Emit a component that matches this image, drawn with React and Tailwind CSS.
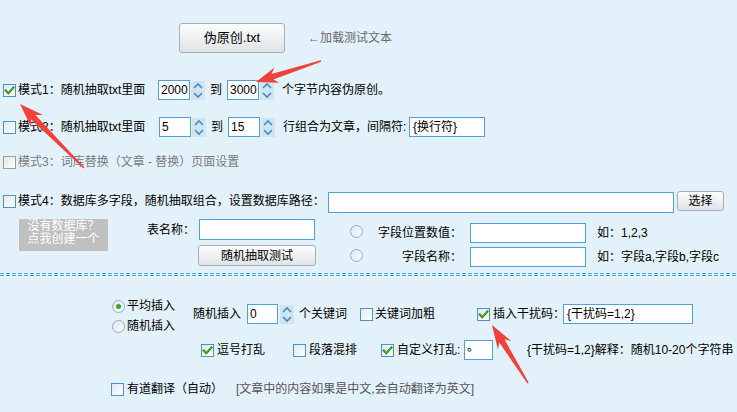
import React from "react";

const Check = ({ checked, gray }) => (
  <span
    className={
      gray
        ? "inline-flex w-[13px] h-[13px] shrink-0 items-center justify-center border border-[#9c9c9c] bg-linear-to-br from-[#e6e6e6] to-white"
        : "inline-flex w-[13px] h-[13px] shrink-0 items-center justify-center border border-[#4d92cc] bg-linear-to-br from-[#dfe9f2] to-white"
    }
  >
    {checked && (
      <svg width="11" height="11" viewBox="0 0 11 11">
        <path d="M1.8 5.6 L4.3 8.2 L9.4 2.6" stroke="#2f8f12" strokeWidth="2.2" fill="none" strokeLinecap="square" />
        <path d="M2.4 5.6 L4.3 7.5 L9 2.8" stroke="#66c22e" strokeWidth="0.9" fill="none" />
      </svg>
    )}
  </span>
);

const Spin = () => (
  <span className="flex w-[14px] h-[19px] shrink-0 items-center justify-center bg-[#d2e4f0]">
    <svg width="12" height="17" viewBox="0 0 12 17">
      <path d="M2 6 L6 2 L10 6" stroke="#3a8fd2" strokeWidth="1.6" fill="none" />
      <path d="M2 11 L6 15 L10 11" stroke="#3a8fd2" strokeWidth="1.6" fill="none" />
    </svg>
  </span>
);

const Radio = ({ on, className = "" }) => (
  <span
    className={
      "flex w-[13px] h-[13px] shrink-0 items-center justify-center rounded-full border border-[#8eaed0] bg-linear-to-br from-[#dde6ef] to-white " +
      className
    }
  >
    {on && <span className="w-[5px] h-[5px] rounded-full bg-[#36a81c]" />}
  </span>
);

const Btn = ({ className = "", children }) => (
  <div
    className={
      "flex shrink-0 items-center justify-center rounded-[3px] border border-[#a9aeb3] bg-linear-to-b from-[#fdfdfd] to-[#e0e4e8] " +
      className
    }
  >
    {children}
  </div>
);

const Box = ({ className = "", children }) => (
  <div className={"flex shrink-0 items-center overflow-hidden whitespace-nowrap border border-[#4ea2da] bg-white pl-[2px] " + className}>
    {children}
  </div>
);

function arrowPts(tx, ty, px, py, headLen, headW, neckW, tailW) {
  const dx = px - tx;
  const dy = py - ty;
  const L = Math.hypot(dx, dy);
  const ux = dx / L;
  const uy = dy / L;
  const nx = -uy;
  const ny = ux;
  const nkx = px - ux * headLen * 0.78;
  const nky = py - uy * headLen * 0.78;
  const bx = px - ux * headLen;
  const by = py - uy * headLen;
  const p = [
    [tx + (nx * tailW) / 2, ty + (ny * tailW) / 2],
    [nkx + (nx * neckW) / 2, nky + (ny * neckW) / 2],
    [bx + (nx * headW) / 2, by + (ny * headW) / 2],
    [px, py],
    [bx - (nx * headW) / 2, by - (ny * headW) / 2],
    [nkx - (nx * neckW) / 2, nky - (ny * neckW) / 2],
    [tx - (nx * tailW) / 2, ty - (ny * tailW) / 2],
  ];
  return p.map((q) => q[0].toFixed(1) + "," + q[1].toFixed(1)).join(" ");
}

export default function App() {
  return (
    <div className="relative w-[737px] h-[412px] overflow-hidden bg-[#e3f1fa] text-[12px] leading-[14px] text-black font-[family-name:'Liberation_Sans','Noto_Sans_CJK_SC',sans-serif]">
      <div className="flex flex-col">
        {/* top button */}
        <div className="mt-[23px] flex h-[30px] items-center pl-[179px]">
          <Btn className="w-[106px] h-[30px] text-[13px]">伪原创.txt</Btn>
          <span className="ml-[23px] text-[#6a6a6a]">←加载测试文本</span>
        </div>

        {/* mode 1 */}
        <div className="mt-[27px] flex h-[20px] items-center pl-[3px] whitespace-nowrap">
          <Check checked />
          <span className="ml-[2px] w-[140px]">模式1：随机抽取txt里面</span>
          <Box className="w-[32px] h-[20px]">2000</Box>
          <span className="ml-[1px]"><Spin /></span>
          <span className="w-[22px] text-center">到</span>
          <Box className="w-[32px] h-[20px]">3000</Box>
          <span className="ml-[1px]"><Spin /></span>
          <span className="ml-[8px]">个字节内容伪原创。</span>
        </div>

        {/* mode 2 */}
        <div className="mt-[17px] flex h-[20px] items-center pl-[3px] whitespace-nowrap">
          <Check />
          <span className="ml-[2px] w-[141px]">模式2：随机抽取txt里面</span>
          <Box className="w-[32px] h-[20px]">5</Box>
          <span className="ml-[1px]"><Spin /></span>
          <span className="w-[22px] text-center">到</span>
          <Box className="w-[32px] h-[20px]">15</Box>
          <span className="ml-[1px]"><Spin /></span>
          <span className="ml-[8px] w-[126px]">行组合为文章，间隔符:</span>
          <Box className="w-[76px] h-[20px] pl-[3px]">{"{换行符}"}</Box>
        </div>

        {/* mode 3 */}
        <div className="mt-[15px] flex h-[20px] items-center pl-[3px] whitespace-nowrap text-[#7c7c7c]">
          <Check gray />
          <span className="ml-[2px]">模式3：词库替换（文章 - 替换）页面设置</span>
        </div>

        {/* mode 4 */}
        <div className="mt-[18px] flex h-[22px] items-center pl-[3px] whitespace-nowrap">
          <Check />
          <span className="ml-[2px] w-[310px]">模式4：数据库多字段，随机抽取组合，设置数据库路径：</span>
          <Box className="w-[346px] h-[21px] mt-[2px]" />
          <Btn className="ml-[3px] w-[47px] h-[20px]">选择</Btn>
        </div>

        {/* db section */}
        <div className="mt-[7px] flex items-start whitespace-nowrap">
          <div className="ml-[19px] flex h-[32px] w-[89px] flex-col items-center bg-[#c0c0c0] pt-[1px] text-[12px] leading-[13px] text-white">
            <span>没有数据库？</span>
            <span>点我创建一个</span>
          </div>
          <div className="ml-[39px] flex flex-col">
            <div className="flex h-[21px] items-center">
              <span className="w-[52px]">表名称：</span>
              <Box className="w-[116px] h-[21px]" />
            </div>
            <div className="mt-[5px] pl-[51px]">
              <Btn className="w-[118px] h-[21px]">随机抽取测试</Btn>
            </div>
          </div>
          <div className="ml-[34px] mt-[4px] flex flex-col">
            <div className="flex h-[20px] items-center">
              <Radio className="mb-[4px]" />
              <span className="w-[99px] text-right">字段位置数值：</span>
              <Box className="ml-[8px] w-[116px] h-[20px]" />
              <span className="ml-[11px]">如：1,2,3</span>
            </div>
            <div className="mt-[4px] flex h-[20px] items-center">
              <Radio className="mb-[4px]" />
              <span className="w-[99px] text-right">字段名称：</span>
              <Box className="ml-[8px] w-[116px] h-[20px]" />
              <span className="ml-[11px]">如：字段a,字段b,字段c</span>
            </div>
          </div>
        </div>

        {/* dashed separator */}
        <div className="mt-[6px] flex flex-col gap-[1px]">
          <div className="h-[1px] w-full bg-[repeating-linear-gradient(90deg,#48a7de_0px,#48a7de_4px,transparent_4px,transparent_6px)]" />
          <div className="h-[1px] w-full bg-[repeating-linear-gradient(90deg,#48a7de_0px,#48a7de_4px,transparent_4px,transparent_6px)]" />
        </div>

        {/* insert row */}
        <div className="mt-[20px] flex items-start pl-[112px] whitespace-nowrap">
          <div className="flex w-[81px] flex-col">
            <div className="flex h-[20px] items-center">
              <Radio on />
              <span className="ml-[2px]">平均插入</span>
            </div>
            <div className="flex h-[20px] items-center">
              <Radio />
              <span className="ml-[2px]">随机插入</span>
            </div>
          </div>
          <div className="mt-[8px] flex h-[20px] items-center">
            <span className="w-[54px]">随机插入</span>
            <Box className="w-[31px] h-[20px]">0</Box>
            <span className="ml-[2px]"><Spin /></span>
            <span className="ml-[5px] w-[61px]">个关键词</span>
            <Check />
            <span className="ml-[2px] w-[102px]">关键词加粗</span>
            <Check checked />
            <span className="ml-[3px] w-[70px]">插入干扰码：</span>
            <Box className="w-[130px] h-[20px] pl-[3px]">{"{干扰码=1,2}"}</Box>
          </div>
        </div>

        {/* shuffle row */}
        <div className="mt-[4px] flex h-[20px] items-center pl-[201px] whitespace-nowrap">
          <Check checked />
          <span className="ml-[3px] w-[76px]">逗号打乱</span>
          <Check />
          <span className="ml-[3px] w-[72px]">段落混排</span>
          <Check checked />
          <span className="ml-[3px] w-[67px]">自定义打乱:</span>
          <Box className="w-[29px] h-[20px]">
            <span className="-mt-[6px]">。</span>
          </Box>
          <span className="ml-[34px]">{"{干扰码=1,2}解释：随机10-20个字符串"}</span>
        </div>

        {/* translate row */}
        <div className="mt-[19px] flex h-[20px] items-center pl-[111px] whitespace-nowrap">
          <Check />
          <span className="ml-[3px] w-[109px]">有道翻译（自动）</span>
          <span className="text-[#555555]">[文章中的内容如果是中文,会自动翻译为英文]</span>
        </div>
      </div>

      {/* red annotation arrows */}
      <svg className="pointer-events-none absolute left-0 top-0" width="737" height="412" viewBox="0 0 737 412">
        <polygon points={arrowPts(84, 168, 20, 104, 24, 17, 6, 1.5)} fill="#f0413a" />
        <polygon points={arrowPts(321, 61, 256, 82, 22, 16, 6, 1.5)} fill="#f0413a" />
        <polygon points={arrowPts(528, 383, 492, 325, 24, 16, 6, 1.5)} fill="#f0413a" />
      </svg>
    </div>
  );
}
